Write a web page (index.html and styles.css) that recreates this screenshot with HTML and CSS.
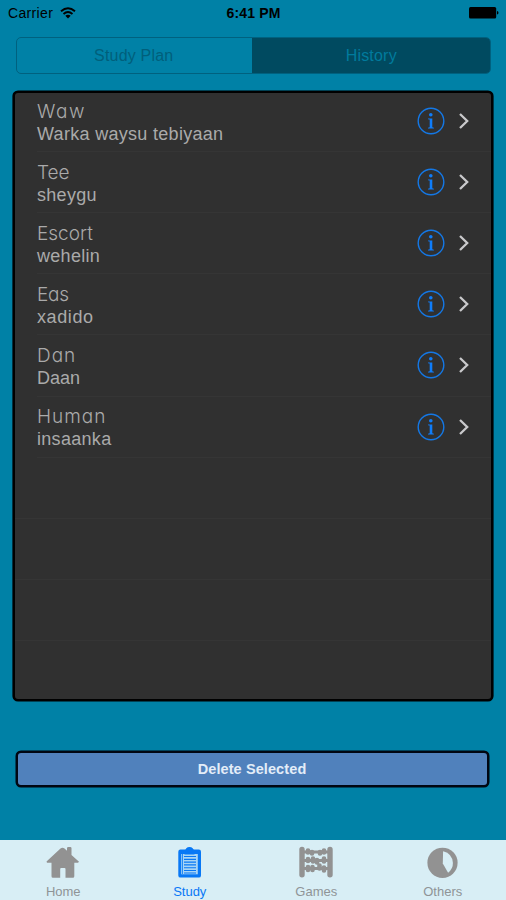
FILE: index.html
```html
<!DOCTYPE html>
<html lang="en">
<head>
<meta charset="utf-8">
<title>History</title>
<link rel="stylesheet" href="styles.css">
</head>
<body>
<svg width="0" height="0" class="defs">
  <symbol id="info" viewBox="0 0 28 28">
    <circle cx="14" cy="14" r="12.8" fill="none" stroke="#1478e6" stroke-width="1.4"/>
    <circle cx="13.8" cy="7.8" r="1.8" fill="#0f7dfa"/>
    <path d="M11 11.5H15.3V20.3L16.9 20.7V21.4H11V20.7L12.7 20.3V12.6L11 12.2Z" fill="#0f7dfa"/>
  </symbol>
  <symbol id="chevron" viewBox="0 0 12 18">
    <path d="M2 2L9.2 9L2 16" fill="none" stroke="#c9c9cb" stroke-width="2.3"/>
  </symbol>
</svg>
<div class="screen">
  <header class="status">
    <div class="carrier"><span>Carrier</span>
      <svg width="16" height="12" viewBox="0 0 16 12"><g fill="none" stroke="#000" stroke-width="1.9"><path d="M1 4.3Q8-1.8 15 4.3"/><path d="M3.5 6.9Q8 3.1 12.5 6.9"/></g><path d="M5.3 8.8Q8 6.7 10.7 8.8L8 11.6Z"/></svg>
    </div>
    <div class="time">6:41 PM</div>
    <svg class="battery" width="30" height="12" viewBox="0 0 30 12"><rect width="27.2" height="11.5" rx="1.5"/><path d="M28 4Q29.5 4.2 29.5 5.8T28 7.6Z"/></svg>
  </header>
  <nav class="segments">
    <div class="segment plan">Study Plan</div>
    <div class="segment selected">History</div>
  </nav>
  <main class="table">
    <div class="row"><div class="words"><div class="term waw">Waw</div><div class="meaning">Warka waysu tebiyaan</div></div><svg class="info"><use href="#info"/></svg><svg class="chevron"><use href="#chevron"/></svg></div>
    <div class="row"><div class="words"><div class="term">Tee</div><div class="meaning">sheygu</div></div><svg class="info"><use href="#info"/></svg><svg class="chevron"><use href="#chevron"/></svg></div>
    <div class="row"><div class="words"><div class="term">Escort</div><div class="meaning">wehelin</div></div><svg class="info"><use href="#info"/></svg><svg class="chevron"><use href="#chevron"/></svg></div>
    <div class="row"><div class="words"><div class="term tight">Eas</div><div class="meaning spaced">xadido</div></div><svg class="info"><use href="#info"/></svg><svg class="chevron"><use href="#chevron"/></svg></div>
    <div class="row"><div class="words"><div class="term wide">Dan</div><div class="meaning snug">Daan</div></div><svg class="info"><use href="#info"/></svg><svg class="chevron"><use href="#chevron"/></svg></div>
    <div class="row"><div class="words"><div class="term wide">Human</div><div class="meaning">insaanka</div></div><svg class="info"><use href="#info"/></svg><svg class="chevron"><use href="#chevron"/></svg></div>
    <div class="row empty"></div>
    <div class="row empty"></div>
    <div class="row empty"></div>
  </main>
  <button class="delete">Delete Selected</button>
  <footer class="tabs">
    <div class="tab"><svg width="36" height="34" viewBox="0 0 36 34"><path fill="#929292" d="M1.5 15.5L15.5 2.5Q17.5 1 19.5 2.5L22 4.8V2.2Q22 1 23.2 1H25.3Q26.5 1 26.5 2.2V9L34 15.7L33 16.7H29.3V30.3Q29.3 31.8 27.8 31.8H20.5V23Q20.5 22 19.5 22H16.2Q15.2 22 15.2 23V31.8H8Q6.5 31.8 6.5 30.3V16.7H2Z"/></svg><span>Home</span></div>
    <div class="tab active"><svg width="36" height="34" viewBox="0 0 36 34"><path fill="#0878f5" d="M8.5 3.5H13.2Q14 3.2 14.3 2.3Q15.5 1 17.5 1T20.7 2.3Q21 3.2 22 3.5H26.8Q29 3.5 29 5.7V29.4Q29 31.6 26.8 31.6H8.5Q6.3 31.6 6.3 29.4V5.7Q6.3 3.5 8.5 3.5Z"/><path d="M9.2 8H25.8V28.3H9.2Z" fill="#a9d5f5"/><path d="M12.5 6.5H22.5V8.5H12.5Z" fill="#0878f5"/><g stroke="#0878f5" stroke-width="1.15"><path d="M12 10.5H24M12 13.3H24M12 16.1H24M12 18.9H24M12 21.7H24M12 24.5H24M12 27H24"/><path d="M10.5 8V28" stroke-width=".8"/></g></svg><span>Study</span></div>
    <div class="tab"><svg width="36" height="34" viewBox="0 0 36 34"><g fill="none" stroke="#929292" stroke-linecap="round"><path d="M4 3.4V28.8M32 3.4V28.8" stroke-width="5.4"/><path d="M4 6H32M4 14.5H32M4 22.5H32" stroke-width="2.8"/><path d="M10 4.5V6.5M14 6V7.5M22 6V7.5M26 4.5V6.5M10 13V15M15 12.5V15.5M19 14V16.5M26 12.5V15.5M10 21V24M14.5 21V24M21.5 19.5V22.5M26 21.5V24.5" stroke-width="4.6"/></g></svg><span>Games</span></div>
    <div class="tab"><svg width="36" height="34" viewBox="0 0 36 34"><circle cx="17.5" cy="16.8" r="15.1" fill="#929292"/><path d="M18.1 5.2Q27.5 7.5 27.9 17.1Q28 23 23.1 26.8L17.8 17.5Z" fill="#d8eef5"/></svg><span>Others</span></div>
  </footer>
</div>
</body>
</html>
```

FILE: styles.css
```css
* { box-sizing: border-box; }
body {
  margin: 0;
  background: #0081a6;
  font-family: "Liberation Sans", Arial, sans-serif;
}
.defs { display: none; }
.screen {
  width: 506px;
  height: 900px;
  display: flex;
  flex-direction: column;
  overflow: hidden;
}
.status {
  height: 26px;
  flex: none;
  display: grid;
  grid-template-columns: 1fr auto 1fr;
  align-items: center;
  padding: 0 7px 0 8px;
  font-size: 14px;
  letter-spacing: .35px;
}
.carrier { display: flex; align-items: center; gap: 7px; }
.time { font-weight: bold; letter-spacing: .15px; }
.battery { justify-self: end; }
.segments {
  flex: none;
  display: flex;
  height: 37px;
  margin: 11px 15px 0 16px;
  border: 1.5px solid #00617f;
  border-radius: 5px;
  overflow: hidden;
}
.segment {
  flex: 1;
  display: flex;
  align-items: center;
  justify-content: center;
  font-size: 16px;
  letter-spacing: .2px;
  color: #005f7b;
}
.plan { flex: 0 0 234.5px; padding-right: 1px; }
.selected { background: #004a60; color: #007b9d; margin-right: -1px; }
.table {
  flex: none;
  height: 610px;
  margin: 17px 13px 0;
  border: 2px solid #000;
  border-radius: 5px;
  box-shadow: 0 0 0 .6px #000;
  background: #303030;
  overflow: hidden;
}
.row {
  display: flex;
  height: 61.15px;
  margin-left: 22px;
  padding-right: 21px;
  align-items: center;
  border-bottom: 1px solid #353535;
}
.empty { margin-left: 0; }
.row:first-child { height: 59px; }
.row:first-child .words, .row:first-child svg { margin-top: -2px; }
.words { flex: 1; color: #aaa; padding-top: 2px; }
.term {
  font-family: Inter, sans-serif;
  font-weight: 300;
  font-size: 19px;
  line-height: 23px;
  font-feature-settings: "cv11" 1;
}
.wide { letter-spacing: 1px; }
.waw { letter-spacing: 1.6px; }
.tight { letter-spacing: -.2px; }
.meaning { font-size: 18px; line-height: 22px; letter-spacing: .3px; }
.spaced { letter-spacing: .6px; }
.snug { letter-spacing: 0; }
.info { width: 28px; height: 28px; margin-right: 13px; }
.chevron { width: 12px; height: 18px; }
.delete {
  flex: none;
  height: 36px;
  margin: 50px 17px 0 16px;
  padding: 0 1px 0 0;
  border: 2px solid #000712;
  border-radius: 5px;
  box-shadow: 0 0 0 .5px #000712;
  background: #5081bc;
  color: #e3edf8;
  font: bold 14.5px "Liberation Sans", Arial, sans-serif;
  letter-spacing: .1px;
}
.tabs {
  flex: none;
  height: 60px;
  margin-top: auto;
  display: flex;
  background: #d8eef5;
}
.tab {
  flex: 1;
  display: flex;
  flex-direction: column;
  align-items: center;
  padding-top: 6px;
  color: #8f9497;
  font-size: 13px;
  line-height: 15px;
}
.tab span { margin-top: 4px; }
.active { color: #0878f5; }
```
